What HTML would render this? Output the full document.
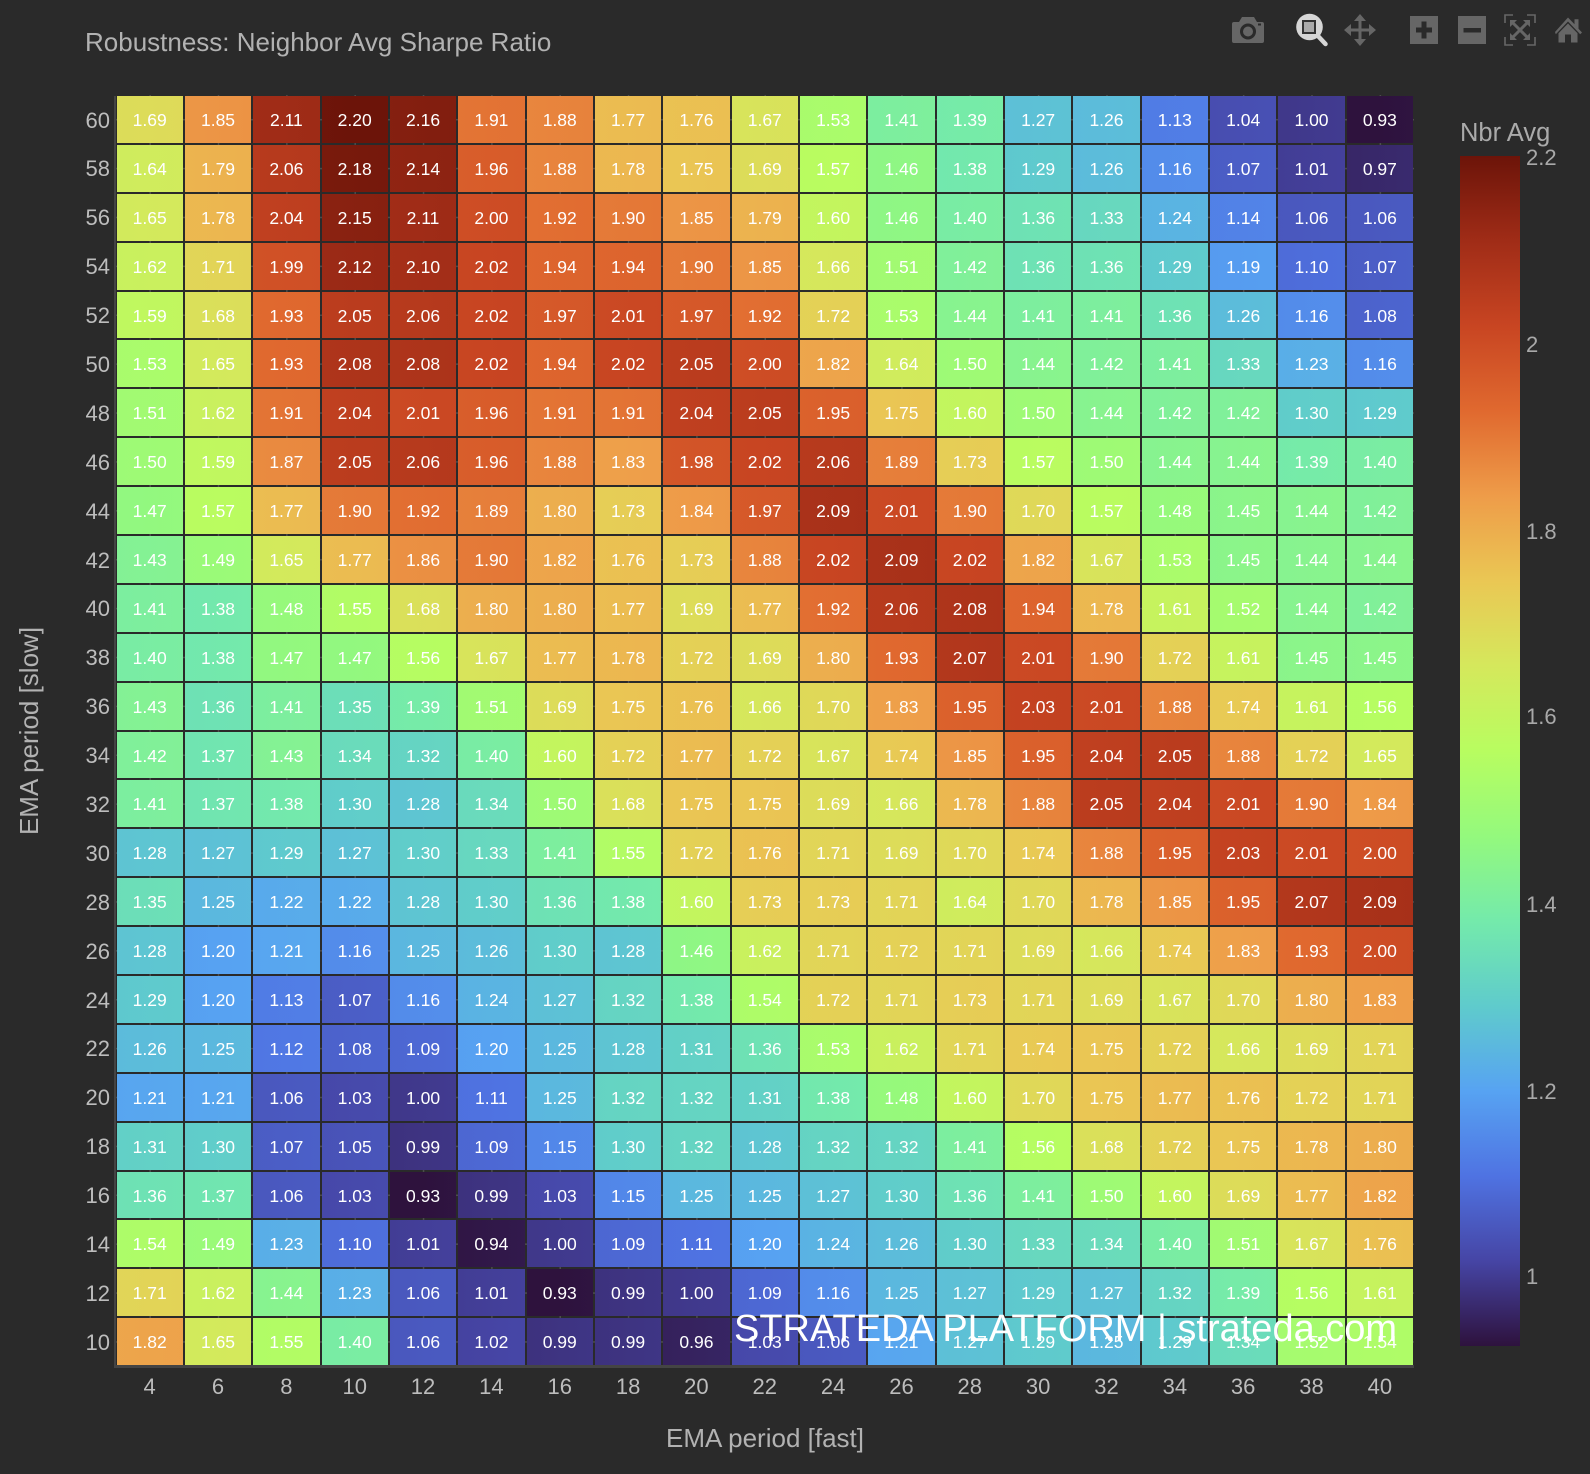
<!DOCTYPE html>
<html lang="en"><head><meta charset="utf-8"><title>Robustness: Neighbor Avg Sharpe Ratio</title>
<style>
html,body{margin:0;padding:0;background:#2a2a2a}
body{position:relative;width:1590px;height:1474px;overflow:hidden;font-family:"Liberation Sans",Arial,sans-serif}
.a{position:absolute;white-space:nowrap}
#title{left:85px;top:29px;font-size:26px;line-height:26px;color:#b2b2b2}
#plot{left:115.5px;top:95px;width:1298.65px;height:1271.4px;display:grid;grid-template-columns:repeat(19,68.35px);grid-template-rows:repeat(26,48.9px);
background-image:linear-gradient(90deg,transparent 33.5px,#4c4c4c 33.5px,#4c4c4c 35px,transparent 35px),linear-gradient(180deg,transparent 23.7px,#4c4c4c 23.7px,#4c4c4c 25.2px,transparent 25.2px);background-size:68.35px 100%,100% 48.9px}
#plot b{margin:1px;font-weight:400;font-size:17.5px;line-height:48.9px;text-align:center;color:#fff;
background-image:linear-gradient(90deg,#2e123d 100px,#4645a5 1010px,#4f73e2 1910px,#57a3f2 2820px,#5fcbcc 3730px,#74eaab 4640px,#94f97d 5540px,#b8fd60 6450px,#d5e85c 7360px,#eac754 8260px,#ee9c49 9170px,#e0692f 10080px,#c84522 10990px,#a02c17 11890px,#6c1409 12800px);
background-size:12900px 100%;background-repeat:no-repeat;background-position:calc((93 - var(--v))*100px - 67px) 0}
#axl{left:114px;top:96px;width:2px;height:1272px;background:#444}
#axb{left:114px;top:1365px;width:1300px;height:3px;background:#444}
#yt{left:60px;top:96.500px;width:50px;display:grid;grid-template-rows:repeat(26,48.9px);text-align:right;font-size:22px;line-height:48.9px;color:#bdbdbd}
#xt{left:115.5px;top:1374px;display:grid;grid-template-columns:repeat(19,68.35px);text-align:center;font-size:22px;line-height:26px;color:#bdbdbd}
#xl{left:665px;top:1425px;width:200px;text-align:center;font-size:26px;line-height:26px;color:#b2b2b2}
#yl{left:28.500px;top:730.500px;font-size:26px;line-height:26px;color:#b2b2b2;transform:translate(-50%,-50%) rotate(-90deg)}
#cbt{left:1460px;top:120px;font-size:25.5px;line-height:26px;color:#aaa}
#cb{left:1460px;top:156px;width:60px;height:1190px;background:linear-gradient(180deg,#6c1409,#a02c17,#c84522,#e0692f,#ee9c49,#eac754,#d5e85c,#b8fd60,#94f97d,#74eaab,#5fcbcc,#57a3f2,#4f73e2,#4645a5,#2e123d)}
.c{left:1526px;font-size:22px;line-height:24px;color:#a9a9a9}
#wm{left:734px;top:1310px;font-size:38px;line-height:38px;color:#fff}
svg{position:absolute;left:0;top:0}
</style></head><body>
<div class="a" id="title">Robustness: Neighbor Avg Sharpe Ratio</div>
<div class="a" id="plot">
<b style=--v:169>1.69</b><b style=--v:185>1.85</b><b style=--v:211>2.11</b><b style=--v:220>2.20</b><b style=--v:216>2.16</b><b style=--v:191>1.91</b><b style=--v:188>1.88</b><b style=--v:177>1.77</b><b style=--v:176>1.76</b><b style=--v:167>1.67</b><b style=--v:153>1.53</b><b style=--v:141>1.41</b><b style=--v:139>1.39</b><b style=--v:127>1.27</b><b style=--v:126>1.26</b><b style=--v:113>1.13</b><b style=--v:104>1.04</b><b style=--v:100>1.00</b><b style=--v:93>0.93</b>
<b style=--v:164>1.64</b><b style=--v:179>1.79</b><b style=--v:206>2.06</b><b style=--v:218>2.18</b><b style=--v:214>2.14</b><b style=--v:196>1.96</b><b style=--v:188>1.88</b><b style=--v:178>1.78</b><b style=--v:175>1.75</b><b style=--v:169>1.69</b><b style=--v:157>1.57</b><b style=--v:146>1.46</b><b style=--v:138>1.38</b><b style=--v:129>1.29</b><b style=--v:126>1.26</b><b style=--v:116>1.16</b><b style=--v:107>1.07</b><b style=--v:101>1.01</b><b style=--v:97>0.97</b>
<b style=--v:165>1.65</b><b style=--v:178>1.78</b><b style=--v:204>2.04</b><b style=--v:215>2.15</b><b style=--v:211>2.11</b><b style=--v:200>2.00</b><b style=--v:192>1.92</b><b style=--v:190>1.90</b><b style=--v:185>1.85</b><b style=--v:179>1.79</b><b style=--v:160>1.60</b><b style=--v:146>1.46</b><b style=--v:140>1.40</b><b style=--v:136>1.36</b><b style=--v:133>1.33</b><b style=--v:124>1.24</b><b style=--v:114>1.14</b><b style=--v:106>1.06</b><b style=--v:106>1.06</b>
<b style=--v:162>1.62</b><b style=--v:171>1.71</b><b style=--v:199>1.99</b><b style=--v:212>2.12</b><b style=--v:210>2.10</b><b style=--v:202>2.02</b><b style=--v:194>1.94</b><b style=--v:194>1.94</b><b style=--v:190>1.90</b><b style=--v:185>1.85</b><b style=--v:166>1.66</b><b style=--v:151>1.51</b><b style=--v:142>1.42</b><b style=--v:136>1.36</b><b style=--v:136>1.36</b><b style=--v:129>1.29</b><b style=--v:119>1.19</b><b style=--v:110>1.10</b><b style=--v:107>1.07</b>
<b style=--v:159>1.59</b><b style=--v:168>1.68</b><b style=--v:193>1.93</b><b style=--v:205>2.05</b><b style=--v:206>2.06</b><b style=--v:202>2.02</b><b style=--v:197>1.97</b><b style=--v:201>2.01</b><b style=--v:197>1.97</b><b style=--v:192>1.92</b><b style=--v:172>1.72</b><b style=--v:153>1.53</b><b style=--v:144>1.44</b><b style=--v:141>1.41</b><b style=--v:141>1.41</b><b style=--v:136>1.36</b><b style=--v:126>1.26</b><b style=--v:116>1.16</b><b style=--v:108>1.08</b>
<b style=--v:153>1.53</b><b style=--v:165>1.65</b><b style=--v:193>1.93</b><b style=--v:208>2.08</b><b style=--v:208>2.08</b><b style=--v:202>2.02</b><b style=--v:194>1.94</b><b style=--v:202>2.02</b><b style=--v:205>2.05</b><b style=--v:200>2.00</b><b style=--v:182>1.82</b><b style=--v:164>1.64</b><b style=--v:150>1.50</b><b style=--v:144>1.44</b><b style=--v:142>1.42</b><b style=--v:141>1.41</b><b style=--v:133>1.33</b><b style=--v:123>1.23</b><b style=--v:116>1.16</b>
<b style=--v:151>1.51</b><b style=--v:162>1.62</b><b style=--v:191>1.91</b><b style=--v:204>2.04</b><b style=--v:201>2.01</b><b style=--v:196>1.96</b><b style=--v:191>1.91</b><b style=--v:191>1.91</b><b style=--v:204>2.04</b><b style=--v:205>2.05</b><b style=--v:195>1.95</b><b style=--v:175>1.75</b><b style=--v:160>1.60</b><b style=--v:150>1.50</b><b style=--v:144>1.44</b><b style=--v:142>1.42</b><b style=--v:142>1.42</b><b style=--v:130>1.30</b><b style=--v:129>1.29</b>
<b style=--v:150>1.50</b><b style=--v:159>1.59</b><b style=--v:187>1.87</b><b style=--v:205>2.05</b><b style=--v:206>2.06</b><b style=--v:196>1.96</b><b style=--v:188>1.88</b><b style=--v:183>1.83</b><b style=--v:198>1.98</b><b style=--v:202>2.02</b><b style=--v:206>2.06</b><b style=--v:189>1.89</b><b style=--v:173>1.73</b><b style=--v:157>1.57</b><b style=--v:150>1.50</b><b style=--v:144>1.44</b><b style=--v:144>1.44</b><b style=--v:139>1.39</b><b style=--v:140>1.40</b>
<b style=--v:147>1.47</b><b style=--v:157>1.57</b><b style=--v:177>1.77</b><b style=--v:190>1.90</b><b style=--v:192>1.92</b><b style=--v:189>1.89</b><b style=--v:180>1.80</b><b style=--v:173>1.73</b><b style=--v:184>1.84</b><b style=--v:197>1.97</b><b style=--v:209>2.09</b><b style=--v:201>2.01</b><b style=--v:190>1.90</b><b style=--v:170>1.70</b><b style=--v:157>1.57</b><b style=--v:148>1.48</b><b style=--v:145>1.45</b><b style=--v:144>1.44</b><b style=--v:142>1.42</b>
<b style=--v:143>1.43</b><b style=--v:149>1.49</b><b style=--v:165>1.65</b><b style=--v:177>1.77</b><b style=--v:186>1.86</b><b style=--v:190>1.90</b><b style=--v:182>1.82</b><b style=--v:176>1.76</b><b style=--v:173>1.73</b><b style=--v:188>1.88</b><b style=--v:202>2.02</b><b style=--v:209>2.09</b><b style=--v:202>2.02</b><b style=--v:182>1.82</b><b style=--v:167>1.67</b><b style=--v:153>1.53</b><b style=--v:145>1.45</b><b style=--v:144>1.44</b><b style=--v:144>1.44</b>
<b style=--v:141>1.41</b><b style=--v:138>1.38</b><b style=--v:148>1.48</b><b style=--v:155>1.55</b><b style=--v:168>1.68</b><b style=--v:180>1.80</b><b style=--v:180>1.80</b><b style=--v:177>1.77</b><b style=--v:169>1.69</b><b style=--v:177>1.77</b><b style=--v:192>1.92</b><b style=--v:206>2.06</b><b style=--v:208>2.08</b><b style=--v:194>1.94</b><b style=--v:178>1.78</b><b style=--v:161>1.61</b><b style=--v:152>1.52</b><b style=--v:144>1.44</b><b style=--v:142>1.42</b>
<b style=--v:140>1.40</b><b style=--v:138>1.38</b><b style=--v:147>1.47</b><b style=--v:147>1.47</b><b style=--v:156>1.56</b><b style=--v:167>1.67</b><b style=--v:177>1.77</b><b style=--v:178>1.78</b><b style=--v:172>1.72</b><b style=--v:169>1.69</b><b style=--v:180>1.80</b><b style=--v:193>1.93</b><b style=--v:207>2.07</b><b style=--v:201>2.01</b><b style=--v:190>1.90</b><b style=--v:172>1.72</b><b style=--v:161>1.61</b><b style=--v:145>1.45</b><b style=--v:145>1.45</b>
<b style=--v:143>1.43</b><b style=--v:136>1.36</b><b style=--v:141>1.41</b><b style=--v:135>1.35</b><b style=--v:139>1.39</b><b style=--v:151>1.51</b><b style=--v:169>1.69</b><b style=--v:175>1.75</b><b style=--v:176>1.76</b><b style=--v:166>1.66</b><b style=--v:170>1.70</b><b style=--v:183>1.83</b><b style=--v:195>1.95</b><b style=--v:203>2.03</b><b style=--v:201>2.01</b><b style=--v:188>1.88</b><b style=--v:174>1.74</b><b style=--v:161>1.61</b><b style=--v:156>1.56</b>
<b style=--v:142>1.42</b><b style=--v:137>1.37</b><b style=--v:143>1.43</b><b style=--v:134>1.34</b><b style=--v:132>1.32</b><b style=--v:140>1.40</b><b style=--v:160>1.60</b><b style=--v:172>1.72</b><b style=--v:177>1.77</b><b style=--v:172>1.72</b><b style=--v:167>1.67</b><b style=--v:174>1.74</b><b style=--v:185>1.85</b><b style=--v:195>1.95</b><b style=--v:204>2.04</b><b style=--v:205>2.05</b><b style=--v:188>1.88</b><b style=--v:172>1.72</b><b style=--v:165>1.65</b>
<b style=--v:141>1.41</b><b style=--v:137>1.37</b><b style=--v:138>1.38</b><b style=--v:130>1.30</b><b style=--v:128>1.28</b><b style=--v:134>1.34</b><b style=--v:150>1.50</b><b style=--v:168>1.68</b><b style=--v:175>1.75</b><b style=--v:175>1.75</b><b style=--v:169>1.69</b><b style=--v:166>1.66</b><b style=--v:178>1.78</b><b style=--v:188>1.88</b><b style=--v:205>2.05</b><b style=--v:204>2.04</b><b style=--v:201>2.01</b><b style=--v:190>1.90</b><b style=--v:184>1.84</b>
<b style=--v:128>1.28</b><b style=--v:127>1.27</b><b style=--v:129>1.29</b><b style=--v:127>1.27</b><b style=--v:130>1.30</b><b style=--v:133>1.33</b><b style=--v:141>1.41</b><b style=--v:155>1.55</b><b style=--v:172>1.72</b><b style=--v:176>1.76</b><b style=--v:171>1.71</b><b style=--v:169>1.69</b><b style=--v:170>1.70</b><b style=--v:174>1.74</b><b style=--v:188>1.88</b><b style=--v:195>1.95</b><b style=--v:203>2.03</b><b style=--v:201>2.01</b><b style=--v:200>2.00</b>
<b style=--v:135>1.35</b><b style=--v:125>1.25</b><b style=--v:122>1.22</b><b style=--v:122>1.22</b><b style=--v:128>1.28</b><b style=--v:130>1.30</b><b style=--v:136>1.36</b><b style=--v:138>1.38</b><b style=--v:160>1.60</b><b style=--v:173>1.73</b><b style=--v:173>1.73</b><b style=--v:171>1.71</b><b style=--v:164>1.64</b><b style=--v:170>1.70</b><b style=--v:178>1.78</b><b style=--v:185>1.85</b><b style=--v:195>1.95</b><b style=--v:207>2.07</b><b style=--v:209>2.09</b>
<b style=--v:128>1.28</b><b style=--v:120>1.20</b><b style=--v:121>1.21</b><b style=--v:116>1.16</b><b style=--v:125>1.25</b><b style=--v:126>1.26</b><b style=--v:130>1.30</b><b style=--v:128>1.28</b><b style=--v:146>1.46</b><b style=--v:162>1.62</b><b style=--v:171>1.71</b><b style=--v:172>1.72</b><b style=--v:171>1.71</b><b style=--v:169>1.69</b><b style=--v:166>1.66</b><b style=--v:174>1.74</b><b style=--v:183>1.83</b><b style=--v:193>1.93</b><b style=--v:200>2.00</b>
<b style=--v:129>1.29</b><b style=--v:120>1.20</b><b style=--v:113>1.13</b><b style=--v:107>1.07</b><b style=--v:116>1.16</b><b style=--v:124>1.24</b><b style=--v:127>1.27</b><b style=--v:132>1.32</b><b style=--v:138>1.38</b><b style=--v:154>1.54</b><b style=--v:172>1.72</b><b style=--v:171>1.71</b><b style=--v:173>1.73</b><b style=--v:171>1.71</b><b style=--v:169>1.69</b><b style=--v:167>1.67</b><b style=--v:170>1.70</b><b style=--v:180>1.80</b><b style=--v:183>1.83</b>
<b style=--v:126>1.26</b><b style=--v:125>1.25</b><b style=--v:112>1.12</b><b style=--v:108>1.08</b><b style=--v:109>1.09</b><b style=--v:120>1.20</b><b style=--v:125>1.25</b><b style=--v:128>1.28</b><b style=--v:131>1.31</b><b style=--v:136>1.36</b><b style=--v:153>1.53</b><b style=--v:162>1.62</b><b style=--v:171>1.71</b><b style=--v:174>1.74</b><b style=--v:175>1.75</b><b style=--v:172>1.72</b><b style=--v:166>1.66</b><b style=--v:169>1.69</b><b style=--v:171>1.71</b>
<b style=--v:121>1.21</b><b style=--v:121>1.21</b><b style=--v:106>1.06</b><b style=--v:103>1.03</b><b style=--v:100>1.00</b><b style=--v:111>1.11</b><b style=--v:125>1.25</b><b style=--v:132>1.32</b><b style=--v:132>1.32</b><b style=--v:131>1.31</b><b style=--v:138>1.38</b><b style=--v:148>1.48</b><b style=--v:160>1.60</b><b style=--v:170>1.70</b><b style=--v:175>1.75</b><b style=--v:177>1.77</b><b style=--v:176>1.76</b><b style=--v:172>1.72</b><b style=--v:171>1.71</b>
<b style=--v:131>1.31</b><b style=--v:130>1.30</b><b style=--v:107>1.07</b><b style=--v:105>1.05</b><b style=--v:99>0.99</b><b style=--v:109>1.09</b><b style=--v:115>1.15</b><b style=--v:130>1.30</b><b style=--v:132>1.32</b><b style=--v:128>1.28</b><b style=--v:132>1.32</b><b style=--v:132>1.32</b><b style=--v:141>1.41</b><b style=--v:156>1.56</b><b style=--v:168>1.68</b><b style=--v:172>1.72</b><b style=--v:175>1.75</b><b style=--v:178>1.78</b><b style=--v:180>1.80</b>
<b style=--v:136>1.36</b><b style=--v:137>1.37</b><b style=--v:106>1.06</b><b style=--v:103>1.03</b><b style=--v:93>0.93</b><b style=--v:99>0.99</b><b style=--v:103>1.03</b><b style=--v:115>1.15</b><b style=--v:125>1.25</b><b style=--v:125>1.25</b><b style=--v:127>1.27</b><b style=--v:130>1.30</b><b style=--v:136>1.36</b><b style=--v:141>1.41</b><b style=--v:150>1.50</b><b style=--v:160>1.60</b><b style=--v:169>1.69</b><b style=--v:177>1.77</b><b style=--v:182>1.82</b>
<b style=--v:154>1.54</b><b style=--v:149>1.49</b><b style=--v:123>1.23</b><b style=--v:110>1.10</b><b style=--v:101>1.01</b><b style=--v:94>0.94</b><b style=--v:100>1.00</b><b style=--v:109>1.09</b><b style=--v:111>1.11</b><b style=--v:120>1.20</b><b style=--v:124>1.24</b><b style=--v:126>1.26</b><b style=--v:130>1.30</b><b style=--v:133>1.33</b><b style=--v:134>1.34</b><b style=--v:140>1.40</b><b style=--v:151>1.51</b><b style=--v:167>1.67</b><b style=--v:176>1.76</b>
<b style=--v:171>1.71</b><b style=--v:162>1.62</b><b style=--v:144>1.44</b><b style=--v:123>1.23</b><b style=--v:106>1.06</b><b style=--v:101>1.01</b><b style=--v:93>0.93</b><b style=--v:99>0.99</b><b style=--v:100>1.00</b><b style=--v:109>1.09</b><b style=--v:116>1.16</b><b style=--v:125>1.25</b><b style=--v:127>1.27</b><b style=--v:129>1.29</b><b style=--v:127>1.27</b><b style=--v:132>1.32</b><b style=--v:139>1.39</b><b style=--v:156>1.56</b><b style=--v:161>1.61</b>
<b style=--v:182>1.82</b><b style=--v:165>1.65</b><b style=--v:155>1.55</b><b style=--v:140>1.40</b><b style=--v:106>1.06</b><b style=--v:102>1.02</b><b style=--v:99>0.99</b><b style=--v:99>0.99</b><b style=--v:96>0.96</b><b style=--v:103>1.03</b><b style=--v:106>1.06</b><b style=--v:121>1.21</b><b style=--v:127>1.27</b><b style=--v:129>1.29</b><b style=--v:125>1.25</b><b style=--v:129>1.29</b><b style=--v:134>1.34</b><b style=--v:152>1.52</b><b style=--v:154>1.54</b>
</div>
<div class="a" id="axl"></div>
<div class="a" id="axb"></div>
<div class="a" id="yt"><span>60</span><span>58</span><span>56</span><span>54</span><span>52</span><span>50</span><span>48</span><span>46</span><span>44</span><span>42</span><span>40</span><span>38</span><span>36</span><span>34</span><span>32</span><span>30</span><span>28</span><span>26</span><span>24</span><span>22</span><span>20</span><span>18</span><span>16</span><span>14</span><span>12</span><span>10</span></div>
<div class="a" id="xt"><span>4</span><span>6</span><span>8</span><span>10</span><span>12</span><span>14</span><span>16</span><span>18</span><span>20</span><span>22</span><span>24</span><span>26</span><span>28</span><span>30</span><span>32</span><span>34</span><span>36</span><span>38</span><span>40</span></div>
<div class="a" id="xl">EMA period [fast]</div>
<div class="a" id="yl">EMA period [slow]</div>
<div class="a" id="cbt">Nbr Avg</div>
<div class="a" id="cb"></div>
<div class="a c" style="top:146px">2.2</div>
<div class="a c" style="top:333px">2</div>
<div class="a c" style="top:520px">1.8</div>
<div class="a c" style="top:705px">1.6</div>
<div class="a c" style="top:893px">1.4</div>
<div class="a c" style="top:1080px">1.2</div>
<div class="a c" style="top:1265px">1</div>
<div class="a" id="wm">STRATEDA PLATFORM | strateda.com</div>
<svg width="1590" height="60" viewBox="0 0 1590 60">
<g fill="#666">
<path d="M1242 17h12l3 5h5a2 2 0 0 1 2 2v17a2 2 0 0 1-2 2h-28a2 2 0 0 1-2-2v-17a2 2 0 0 1 2-2h5z"/>
<circle cx="1248" cy="31.5" r="8" fill="#2a2a2a"/><circle cx="1248" cy="31.5" r="5"/><rect x="1258" y="23.5" width="3" height="2" fill="#2a2a2a"/>
<path d="M1360 14l6 7h-4.500v7.500h7.500v-4.500l7 6-7 6v-4.500h-7.500v7.500h4.500l-6 7-6-7h4.500v-7.500h-7.500v4.500l-7-6 7-6v4.500h7.500v-7.500h-4.500z"/>
<path fill-rule="evenodd" d="M1410 16h28v28h-28zM1421.500 21.500v6h-5.500v5h5.500v6h5v-6h5.500v-5h-5.500v-6z"/>
<path fill-rule="evenodd" d="M1458 16h28v28h-28zM1463.500 28v4.500h17.500v-4.500z"/>
<path d="M1555 32l13-14.500 6.500 6.800v-5h4v9.500l3.500 3.700-1.800 1.700-12.200-12.700-12.200 12.700z"/>
<path d="M1568 23.500l9.500 9.800v9.200h-6.500v-8h-6v8h-6.500v-9.200z"/>
</g>
<g fill="none" stroke="#666" stroke-width="1.600">
<path d="M1513 15h-8v8M1527 15h8v8M1513 45h-8v-8M1527 45h8v-8"/>
</g>
<g fill="none" stroke="#666" stroke-width="3"><path d="M1512 22l16 16M1528 22l-16 16"/></g>
<g fill="#666"><path d="M1510 20h7l-7 7zM1530 20h-7l7 7zM1510 40h7l-7-7zM1530 40h-7l7-7z"/></g>
<path d="M1318 36l7.500 8" stroke="#d6d6d6" stroke-width="4.500" stroke-linecap="round" fill="none"/>
<circle cx="1309.500" cy="27" r="13.300" fill="#d6d6d6"/>
<rect x="1303" y="21" width="12" height="12" fill="#aaa" stroke="#333" stroke-width="2"/>
</svg>
</body></html>
